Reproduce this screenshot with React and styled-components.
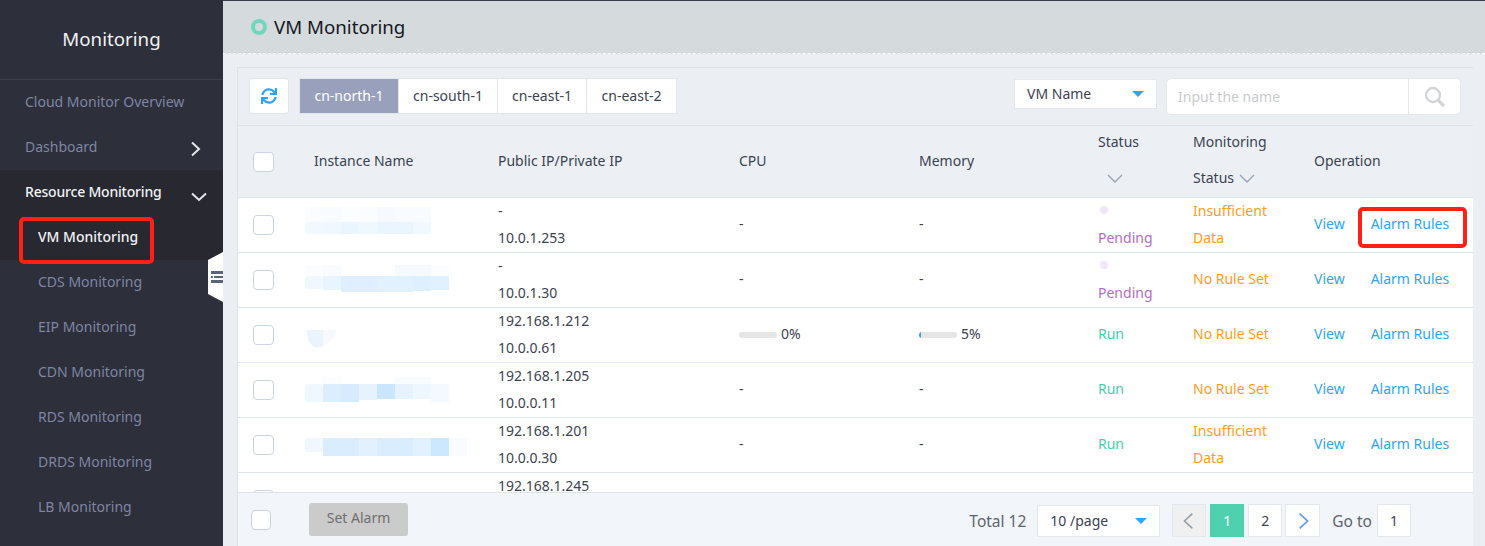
import React from "react";
import styled, { createGlobalStyle } from "styled-components";
import { FaSync } from "react-icons/fa";

const GlobalStyle = createGlobalStyle`
  html, body {
    margin: 0;
    height: 100%;
    overflow: hidden;
    font-family: "Noto Sans", "Liberation Sans", sans-serif;
    font-size: 14px;
    color: #3b4252;
  }
  #root { height: 100%; }
  * { box-sizing: border-box; }
`;

const Page = styled.div`
  display: flex;
  height: 100%;
  position: relative;
  background: #ebeff4;
  border-top: 1px solid #3a3c48;
`;

const Sidebar = styled.aside`
  width: 223px;
  flex: none;
  margin-top: -1px;
  background: #2d2f3a;
  position: relative;
`;

const SideTitle = styled.div`
  height: 80px;
  line-height: 78px;
  text-align: center;
  font-size: 18.7px;
  color: #f2f3f5;
  border-bottom: 1px solid #3a3c48;
`;

const NavItem = styled.div`
  display: flex;
  align-items: center;
  justify-content: space-between;
  height: 45px;
  padding: 0 20px 3px ${(p) => (p.$sub ? "38px" : "25px")};
  color: ${(p) => (p.$active ? "#f0f1f4" : "#7d86a3")};
  background: ${(p) => (p.$dark ? "#272830" : "transparent")};
  font-weight: ${(p) => (p.$active ? 500 : 400)};
  letter-spacing: ${(p) => (p.$tight ? "-0.2px" : "0")};
`;

const NavArrow = styled.span`
  display: flex;
  margin-top: ${(p) => p.$top}px;
  margin-right: ${(p) => p.$right || 0}px;
`;

const Marker = styled.div`
  position: absolute;
  border: 4px solid #ff2116;
  border-radius: 5px;
  pointer-events: none;
`;

const NavMarker = styled(Marker)`
  left: 19px;
  top: 216px;
  width: 135px;
  height: 47px;
`;

const RuleMarker = styled(Marker)`
  left: 1358px;
  top: 206px;
  width: 109px;
  height: 41px;
`;

const CollapseTab = styled.div`
  position: absolute;
  right: 0;
  top: 252px;
  width: 15px;
  height: 50px;
  display: flex;
  align-items: center;
  justify-content: flex-end;
  background: #fff;
  clip-path: polygon(100% 0, 100% 100%, 0 84%, 0 16%);
`;

const Main = styled.main`
  flex: 1;
  min-width: 0;
  display: flex;
  flex-direction: column;
`;

const Header = styled.header`
  height: 53px;
  flex: none;
  display: flex;
  align-items: center;
  gap: 7px;
  padding-left: 28px;
  background: #d5dadd;
  border-bottom: 1px dashed #fff;
  font-size: 18.7px;
  color: #15181d;
`;

const HeaderTitle = styled.span`
  padding-bottom: 2px;
`;

const Ring = styled.span`
  width: 16px;
  height: 16px;
  border: 4px solid #6fd7bd;
  border-radius: 50%;
`;

const Content = styled.div`
  flex: 1;
  min-height: 0;
  padding: 13px 12px 0 14px;
  display: flex;
`;

const Panel = styled.section`
  flex: 1;
  min-width: 0;
  display: flex;
  flex-direction: column;
  border-top: 1px solid #dde3ea;
  border-left: 1px solid #dde3ea;
`;

const Toolbar = styled.div`
  height: 58px;
  flex: none;
  display: flex;
  align-items: flex-start;
  padding: 10px 12px 0 11px;
  border-bottom: 1px solid #dde3ea;
`;

const RefreshButton = styled.button`
  width: 40px;
  height: 36px;
  padding: 0;
  margin-right: 10px;
  display: flex;
  align-items: center;
  justify-content: center;
  background: #fff;
  color: #2fa4f7;
  border: 1px solid #e0e6ed;
  border-radius: 3px;
  font-size: 16px;
`;

const Tabs = styled.div`
  display: flex;
  height: 36px;
  border: 1px solid #e0e6ed;
  background: #fff;
`;

const Tab = styled.div`
  display: flex;
  align-items: center;
  justify-content: center;
  width: ${(p) => p.$w}px;
  padding-bottom: 2px;
  color: ${(p) => (p.$active ? "#fff" : "#3b4252")};
  background: ${(p) => (p.$active ? "#98a0bc" : "transparent")};
  border-left: ${(p) => (p.$first ? "none" : "1px solid #e0e6ed")};
`;

const ToolbarEnd = styled.div`
  margin-left: auto;
  display: flex;
  gap: 9px;
`;

const Select = styled.div`
  display: flex;
  align-items: center;
  justify-content: space-between;
  width: ${(p) => p.$w}px;
  height: ${(p) => p.$h}px;
  margin-top: ${(p) => p.$top || 0}px;
  padding: 0 12px 2px 12px;
  background: #fff;
  border: 1px solid #e3e8ee;
  color: #3b4252;
`;

const Caret = styled.span`
  width: 0;
  height: 0;
  margin-top: 2px;
  border-left: 6.5px solid transparent;
  border-right: 6.5px solid transparent;
  border-top: 6.5px solid #2fa4f7;
`;

const Search = styled.div`
  display: flex;
  width: 295px;
  height: 37px;
  background: #fff;
  border: 1px solid #e3e8ee;
  border-radius: 5px;
`;

const SearchInput = styled.div`
  flex: 1;
  display: flex;
  align-items: center;
  padding-left: 11px;
  color: #c9cbce;
  border-right: 1px solid #e3e8ee;
`;

const SearchIcon = styled.div`
  width: 51px;
  display: flex;
  align-items: center;
  justify-content: center;
`;

const columns = "67px 193px 241px 180px 179px 95px 121px 1fr";

const HeadRow = styled.div`
  height: 72px;
  flex: none;
  display: grid;
  grid-template-columns: ${columns};
  grid-template-rows: 71px;
  align-items: center;
  background: #ecf0f5;
  border-bottom: 1px solid #dde3ea;
  line-height: 36px;
`;

const Body = styled.div`
  flex: 1;
  min-height: 0;
  overflow: hidden;
  background: #fff;
`;

const Row = styled.div`
  height: 55px;
  display: grid;
  grid-template-columns: ${columns};
  grid-template-rows: 54px;
  align-items: center;
  border-bottom: 1px solid #dfe5ee;
  line-height: 27px;
`;

const CheckCell = styled.div`
  padding-left: 15px;
  display: flex;
`;

const Checkbox = styled.span`
  display: block;
  width: 21px;
  height: 20px;
  background: #fff;
  border: 1px solid #c8d4e2;
  border-radius: 4px;
`;

const Cell = styled.div`
  padding-bottom: 3px;
  color: ${(p) => p.$color || "inherit"};
`;

const HeadCell = styled.div`
  padding-bottom: 1px;
  padding-left: ${(p) => p.$indent || 0}px;
`;

const SortHead = styled.div`
  display: flex;
  align-items: center;
  gap: 5px;
`;

const Smear = styled.svg`
  display: block;
  align-self: stretch;
`;

const StatusDot = styled.span`
  display: block;
  width: 8px;
  height: 8px;
  margin: 9px 0 10px 2px;
  border-radius: 50%;
  background: #f1e7f8;
`;

const Usage = styled.div`
  display: flex;
  align-items: center;
  gap: 4px;
  padding-bottom: 3px;
`;

const Track = styled.div`
  width: 38px;
  height: 6px;
  margin-top: 3px;
  border-radius: 3px;
  background: #e6e6e6;
  overflow: hidden;
`;

const Fill = styled.div`
  height: 100%;
  background: #2fa4f7;
`;

const Ops = styled.div`
  display: flex;
  gap: 26px;
  padding-bottom: 3px;
  color: #2fa4f7;
`;

const Footer = styled.div`
  height: 54px;
  flex: none;
  display: flex;
  align-items: center;
  padding: 0 62px 0 13px;
  background: #f2f5f9;
  border-top: 1px solid #dde3ea;
`;

const FooterCheck = styled(Checkbox)`
  width: 20px;
`;

const SetAlarm = styled.button`
  width: 99px;
  height: 33px;
  margin: 0 0 0 38px;
  padding: 0 0 4px;
  background: #cbcbcb;
  color: #6f6f6f;
  border: none;
  border-radius: 3px;
  font: inherit;
`;

const Pager = styled.div`
  margin-left: auto;
  margin-top: 2px;
  display: flex;
  align-items: center;
`;

const Total = styled.span`
  margin-right: 11px;
  font-size: 15.5px;
  color: #5d6470;
`;

const PageButton = styled.div`
  width: ${(p) => p.$w || 34}px;
  height: 33px;
  display: flex;
  align-items: center;
  justify-content: center;
  margin-left: ${(p) => p.$gap ?? 4}px;
  color: ${(p) => (p.$current ? "#fff" : "#3b4252")};
  background: ${(p) => (p.$current ? "#4fd1b0" : p.$disabled ? "#f0f0f0" : "#fff")};
  border: 1px solid ${(p) => (p.$current ? "#4fd1b0" : "#e3e8ee")};
`;

const GoTo = styled.span`
  margin-left: 12px;
  font-size: 15.5px;
  color: #5d6470;
`;

const Chevron = ({ dir, color = "#fff", size = 16, width = 2 }) => {
  const points = {
    right: "5,1.5 12,8 5,14.5",
    left: "11,1.5 4,8 11,14.5",
    down: "1,4.5 8,11 15,4.5",
  };
  return (
    <svg width={size} height={size} viewBox="0 0 16 16" fill="none">
      <polyline points={points[dir]} stroke={color} strokeWidth={width} />
    </svg>
  );
};

const WideChevron = () => (
  <svg width="16" height="9" viewBox="0 0 16 9" fill="none">
    <polyline points="1,1 8,8 15,1" stroke="#98a2b6" strokeWidth="1.4" />
  </svg>
);

const ListIcon = () => (
  <svg width="12" height="16" viewBox="0 0 12 16">
    <rect x="0" y="2" width="12" height="3" fill="#5c6478" />
    <rect x="0" y="7" width="2" height="2" fill="#5c6478" />
    <rect x="3" y="7" width="9" height="2" fill="#5c6478" />
    <rect x="0" y="11" width="12" height="3" fill="#5c6478" />
  </svg>
);

const MagnifierIcon = () => (
  <svg width="22" height="22" viewBox="0 0 22 22" fill="none" stroke="#d3d6d9">
    <circle cx="9" cy="9" r="7" strokeWidth="2.4" />
    <line x1="14" y1="14" x2="20" y2="20" strokeWidth="3.2" />
  </svg>
);

// mosaic over the instance names: [x, y, w, h, colour, corner], or [path, colour]
const smears = [
  [
    [0, 9, 18, 15, "#fafcff"], [18, 9, 18, 15, "#f8fbff"], [36, 9, 18, 15, "#fbfdff"], [54, 9, 18, 15, "#fafcff"],
    [72, 9, 18, 15, "#f6faff"], [90, 9, 36, 15, "#f8fbff"],
    [0, 24, 18, 12, "#f2f8ff", 2], [18, 24, 18, 12, "#f1f7ff"], [36, 24, 18, 12, "#ebf5ff"], [54, 24, 18, 12, "#eff7ff"],
    [72, 24, 36, 12, "#ebf5ff"], [108, 24, 18, 12, "#f2f8ff"],
  ],
  [
    [0, 12, 18, 11, "#fbfdff"], [18, 12, 18, 11, "#f8fbff"], [90, 12, 36, 11, "#f6faff"], [126, 12, 18, 11, "#fbfdff"],
    [0, 23, 18, 13, "#f0f7ff", 3], [18, 23, 18, 14, "#e9f4ff"], [36, 23, 36, 16, "#dfefff"], [72, 23, 36, 16, "#e2f1ff"],
    [108, 23, 18, 15, "#deefff"], [126, 23, 18, 14, "#e2f1ff"],
  ],
  [
    ["M2 22H18V38Q12 41 8 38Q2 34 2 22Z", "#e9f4ff"],
    ["M18 22H32Q30 32 18 38Z", "#f6faff"],
  ],
  [
    [18, 14, 18, 7, "#fbfdff"], [90, 14, 36, 7, "#f8fbff"],
    [0, 21, 18, 18, "#eff7ff", 3], [18, 21, 18, 18, "#dcedfd"], [36, 21, 18, 18, "#d6ebfd"], [54, 21, 18, 16, "#e6f3ff"],
    [72, 21, 18, 15, "#c9e6fe"], [90, 21, 18, 15, "#e6f3ff"], [108, 21, 18, 15, "#eef6ff"], [126, 21, 18, 18, "#f3f9ff"],
  ],
  [
    [0, 20, 18, 14, "#f1f7ff", 3], [18, 20, 18, 18, "#d9edfe"], [36, 20, 18, 18, "#d9edfe"], [54, 20, 18, 18, "#e2f1ff"],
    [72, 20, 36, 18, "#d9edfe"], [108, 20, 18, 18, "#e2f1ff"], [126, 20, 18, 18, "#cce8fe"], [144, 20, 18, 18, "#f8fbff"],
  ],
];

const orange = "#ff9c19";
const purple = "#b26dc6";
const green = "#3fd0ab";

const rows = [
  { pub: "-", pri: "10.0.1.253", status: "Pending", rule: ["Insufficient", "Data"] },
  { pub: "-", pri: "10.0.1.30", status: "Pending", rule: ["No Rule Set"] },
  { pub: "192.168.1.212", pri: "10.0.0.61", status: "Run", rule: ["No Rule Set"], cpu: 0, mem: 5 },
  { pub: "192.168.1.205", pri: "10.0.0.11", status: "Run", rule: ["No Rule Set"] },
  { pub: "192.168.1.201", pri: "10.0.0.30", status: "Run", rule: ["Insufficient", "Data"] },
];

const UsageCell = ({ value }) =>
  value === undefined ? (
    <Cell>-</Cell>
  ) : (
    <Usage>
      <Track>
        <Fill style={{ width: `${value}%` }} />
      </Track>
      {value}%
    </Usage>
  );

const SmearShape = ({ shape }) =>
  typeof shape[0] === "string" ? (
    <path d={shape[0]} fill={shape[1]} />
  ) : (
    <rect x={shape[0]} y={shape[1]} width={shape[2]} height={shape[3]} fill={shape[4]} rx={shape[5]} />
  );

const App = () => (
  <>
    <GlobalStyle />
    <Page>
      <Sidebar>
        <SideTitle>Monitoring</SideTitle>
        <NavItem>Cloud Monitor Overview</NavItem>
        <NavItem>
          Dashboard
          <NavArrow $top={6}>
            <Chevron dir="right" color="#e4e6ea" size={16} />
          </NavArrow>
        </NavItem>
        <NavItem $active $dark $tight>
          Resource Monitoring
          <NavArrow $top={11} $right={-4}>
            <Chevron dir="down" color="#e4e6ea" size={16} />
          </NavArrow>
        </NavItem>
        <NavItem $sub $active $dark>VM Monitoring</NavItem>
        <NavItem $sub>CDS Monitoring</NavItem>
        <NavItem $sub>EIP Monitoring</NavItem>
        <NavItem $sub>CDN Monitoring</NavItem>
        <NavItem $sub>RDS Monitoring</NavItem>
        <NavItem $sub>DRDS Monitoring</NavItem>
        <NavItem $sub>LB Monitoring</NavItem>
        <CollapseTab>
          <ListIcon />
        </CollapseTab>
      </Sidebar>
      <Main>
        <Header>
          <Ring />
          <HeaderTitle>VM Monitoring</HeaderTitle>
        </Header>
        <Content>
          <Panel>
            <Toolbar>
              <RefreshButton>
                <FaSync />
              </RefreshButton>
              <Tabs>
                <Tab $w={98} $active $first>cn-north-1</Tab>
                <Tab $w={99}>cn-south-1</Tab>
                <Tab $w={89}>cn-east-1</Tab>
                <Tab $w={90}>cn-east-2</Tab>
              </Tabs>
              <ToolbarEnd>
                <Select $w={143} $h={30} $top={1}>
                  VM Name
                  <Caret />
                </Select>
                <Search>
                  <SearchInput>Input the name</SearchInput>
                  <SearchIcon>
                    <MagnifierIcon />
                  </SearchIcon>
                </Search>
              </ToolbarEnd>
            </Toolbar>
            <HeadRow>
              <CheckCell>
                <Checkbox />
              </CheckCell>
              <HeadCell $indent={9}>Instance Name</HeadCell>
              <HeadCell>Public IP/Private IP</HeadCell>
              <HeadCell>CPU</HeadCell>
              <HeadCell>Memory</HeadCell>
              <Cell>
                Status
                <SortHead>
                  &nbsp;<WideChevron />
                </SortHead>
              </Cell>
              <Cell>
                Monitoring
                <SortHead>
                  Status <WideChevron />
                </SortHead>
              </Cell>
              <HeadCell>Operation</HeadCell>
            </HeadRow>
            <Body>
              {rows.map((row, i) => (
                <Row key={row.pri}>
                  <CheckCell>
                    <Checkbox />
                  </CheckCell>
                  <Smear width="170" height="54" viewBox="0 0 170 54">
                    {smears[i].map((shape, n) => (
                      <SmearShape key={n} shape={shape} />
                    ))}
                  </Smear>
                  <Cell>
                    {row.pub}
                    <br />
                    {row.pri}
                  </Cell>
                  <UsageCell value={row.cpu} />
                  <UsageCell value={row.mem} />
                  <Cell $color={row.status === "Run" ? green : purple}>
                    {row.status === "Pending" && <StatusDot />}
                    {row.status}
                  </Cell>
                  <Cell $color={orange}>
                    {row.rule.map((line) => (
                      <div key={line}>{line}</div>
                    ))}
                  </Cell>
                  <Ops>
                    <span>View</span>
                    <span>Alarm Rules</span>
                  </Ops>
                </Row>
              ))}
              <Row>
                <CheckCell>
                  <Checkbox />
                </CheckCell>
                <span />
                <Cell>
                  192.168.1.245
                  <br />
                  &nbsp;
                </Cell>
              </Row>
            </Body>
            <Footer>
              <FooterCheck />
              <SetAlarm>Set Alarm</SetAlarm>
              <Pager>
                <Total>Total 12</Total>
                <Select $w={123} $h={32} $top={1}>
                  10 /page
                  <Caret />
                </Select>
                <PageButton $gap={12} $disabled>
                  <Chevron dir="left" color="#9aa0a8" size={18} width={1.5} />
                </PageButton>
                <PageButton $current>1</PageButton>
                <PageButton>2</PageButton>
                <PageButton $gap={3} $w={35}>
                  <Chevron dir="right" color="#5b9cf5" size={18} width={1.5} />
                </PageButton>
                <GoTo>Go to</GoTo>
                <PageButton $gap={5}>1</PageButton>
              </Pager>
            </Footer>
          </Panel>
        </Content>
      </Main>
      <NavMarker />
      <RuleMarker />
    </Page>
  </>
);

export default App;
